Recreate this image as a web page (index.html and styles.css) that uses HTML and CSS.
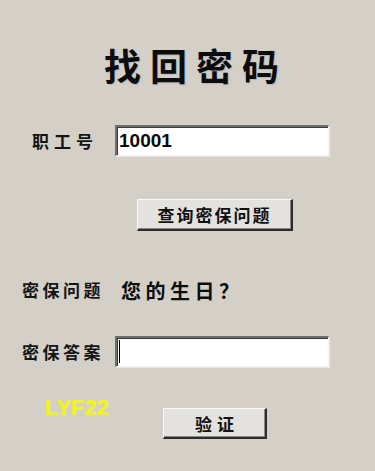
FILE: index.html
```html
<!DOCTYPE html>
<html lang="zh-CN">
<head>
<meta charset="utf-8">
<title>找回密码</title>
<link rel="stylesheet" href="styles.css">
</head>
<body>
<main class="page">
  <h1 class="title">找回密码</h1>
  <div class="row row-id">
    <label class="label label-id">职工号</label>
    <input class="field" type="text" value="10001">
  </div>
  <div class="row row-query">
    <button class="btn btn-query" type="button">查询密保问题</button>
  </div>
  <div class="row row-question">
    <span class="label label-q">密保问题</span>
    <span class="question">您的生日？</span>
  </div>
  <div class="row row-answer">
    <label class="label label-q">密保答案</label>
    <span class="field-wrap">
      <input class="field" type="text" value="">
      <span class="caret"></span>
    </span>
  </div>
  <div class="row row-verify">
    <span class="mark">LYF22</span>
    <button class="btn btn-verify" type="button">验证</button>
  </div>
</main>
</body>
</html>
```

FILE: styles.css
```css
html, body {
  margin: 0;
  padding: 0;
  background: #d4d0c8;
}
body {
  width: 375px;
  height: 471px;
  overflow: hidden;
  font-family: "Noto Sans CJK SC", "Noto Sans", sans-serif;
  color: #111;
}
.page {
  padding-top: 43px;
}
.title {
  margin: 0 0 0 104px;
  font-size: 37px;
  line-height: 44px;
  height: 44px;
  font-weight: 700;
  letter-spacing: 9px;
  color: #0c0c0c;
  text-shadow: 1px 1px 1px rgba(120,140,170,0.35);
}
.row {
  display: flex;
  align-items: center;
}
.row-id {
  margin-top: 38px;
  height: 31px;
}
.label {
  font-size: 17px;
  font-weight: 700;
  color: #141414;
  line-height: 20px;
}
.label-id {
  width: 83px;
  padding-left: 32px;
  letter-spacing: 5px;
}
.label-q {
  width: 93px;
  padding-left: 22px;
  letter-spacing: 3.5px;
}
.field {
  box-sizing: border-box;
  width: 214px;
  height: 31px;
  margin: 0;
  padding: 0 0 0 2px;
  background: #fff;
  border-style: solid;
  border-width: 2px 1px 1px 2px;
  border-color: #6e6e6e #f4f4f4 #f4f4f4 #6e6e6e;
  box-shadow: inset 1px 1px 0 #3a3a3a, 1px 1px 0 #e8e6e2;
  font-family: "Liberation Sans", Arial, sans-serif;
  font-size: 19px;
  font-weight: 700;
  color: #0a0a0a;
  outline: none;
}
.row-query {
  margin-top: 43px;
  padding-left: 137px;
}
.btn {
  box-sizing: border-box;
  margin: 0;
  padding: 0;
  background: #e4e2de;
  border-style: solid;
  border-width: 1px 2px 2px 1px;
  border-color: #fafafa #2c2c2c #2c2c2c #fafafa;
  box-shadow: inset -1px -1px 0 #8a8886;
  font-family: "Noto Sans CJK SC", sans-serif;
  font-size: 17px;
  font-weight: 700;
  color: #111;
  letter-spacing: 2px;
  line-height: 1;
}
.btn-query {
  width: 156px;
  height: 32px;
}
.row-question {
  margin-top: 47px;
  height: 24px;
}
.question {
  margin-left: 6px;
  font-size: 20px;
  font-weight: 700;
  letter-spacing: 4.5px;
  color: #0c0c0c;
}
.row-answer {
  margin-top: 34px;
  height: 31px;
}
.field-wrap {
  position: relative;
  display: block;
}
.caret {
  position: absolute;
  left: 4px;
  top: 4px;
  width: 1px;
  height: 23px;
  background: #000;
}
.row-verify {
  margin-top: 30px;
  align-items: flex-start;
}
.mark {
  width: 118px;
  padding-left: 45px;
  box-sizing: border-box;
  font-family: "Liberation Sans", Arial, sans-serif;
  font-size: 22px;
  font-weight: 700;
  line-height: 22px;
  color: #f2f21c;
  text-shadow: 0 0 1px #f8f85a;
}
.btn-verify {
  margin-top: 11px;
  margin-left: 45px;
  width: 104px;
  height: 31px;
  letter-spacing: 5px;
  padding-left: 5px;
}
```
